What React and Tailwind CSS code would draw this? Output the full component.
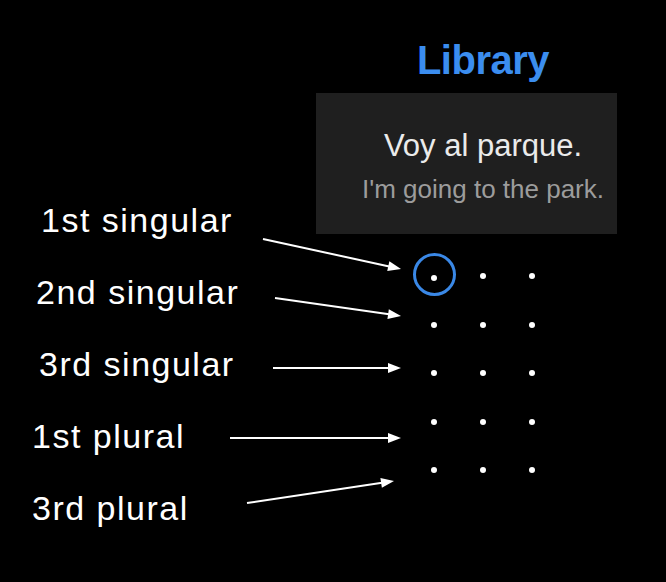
import React from 'react';

const LABELS = [
  { text: '1st singular', ml: 'ml-[41px]' },
  { text: '2nd singular', ml: 'ml-[36px]' },
  { text: '3rd singular', ml: 'ml-[39px]' },
  { text: '1st plural', ml: 'ml-[32px]' },
  { text: '3rd plural', ml: 'ml-[32px]' },
];

const ARROWS = [
  [263, 239, 401, 269],
  [275, 298, 401, 316],
  [273, 368, 401, 368],
  [230, 438, 401, 438],
  [247, 503, 394, 481],
];

const Arrow = ({ x1, y1, x2, y2 }) => {
  const a = Math.atan2(y2 - y1, x2 - x1);
  const len = 13;
  const w = 5;
  const bx = x2 - len * Math.cos(a);
  const by = y2 - len * Math.sin(a);
  const px = -Math.sin(a) * w;
  const py = Math.cos(a) * w;
  return (
    <g>
      <line x1={x1} y1={y1} x2={bx + 1 * Math.cos(a)} y2={by + 1 * Math.sin(a)} stroke="white" strokeWidth="2" />
      <polygon points={`${x2},${y2} ${bx + px},${by + py} ${bx - px},${by - py}`} fill="white" />
    </g>
  );
};

const Dots = () => {
  const cells = Array.from({ length: 15 });
  return (
    <div className="grid grid-cols-3 w-[146px] mx-auto mt-[18px]">
      {cells.map((_, i) => (
        <div key={i} className="h-[48.5px] flex items-center justify-center relative">
          {i === 0 && (
            <div className="absolute w-[43px] h-[43px] rounded-full border-[3px] border-[#3a88e6] top-[1px] left-[3px]" />
          )}
          <div className={`w-[6px] h-[6px] rounded-full bg-white ${i === 0 ? 'mt-[3px]' : ''}`} />
        </div>
      ))}
    </div>
  );
};

export default function App() {
  return (
    <div className="relative w-[666px] h-[582px] bg-black overflow-hidden" style={{ fontFamily: '"Liberation Sans", Arial, sans-serif' }}>
      <div className="flex">
        {/* labels */}
        <div className="w-[316px] pt-[184px] flex flex-col text-white text-[34px] leading-[72px] tracking-[1.5px]">
          {LABELS.map((l) => (
            <div key={l.text} className={l.ml}>{l.text}</div>
          ))}
        </div>

        {/* phone area */}
        <div className="w-[334px] pt-[40px] flex flex-col">
          <h1 className="text-center text-[40px] leading-[40px] font-bold text-[#3b8def] tracking-[-0.5px]">Library</h1>
          <div className="mt-[13px] w-[301px] h-[141px] bg-[#1f1f1f] pl-[33px] pt-[35px] text-center">
            <div className="text-[31px] leading-[36px] text-[#ebebeb]">Voy al parque.</div>
            <div className="mt-[10px] text-[26px] leading-[30px] text-[#9c9c9c]">I'm going to the park.</div>
          </div>
          <Dots />
        </div>
      </div>

      <svg className="absolute inset-0 pointer-events-none" width="666" height="582">
        {ARROWS.map(([x1, y1, x2, y2], i) => (
          <Arrow key={i} x1={x1} y1={y1} x2={x2} y2={y2} />
        ))}
      </svg>
    </div>
  );
}
